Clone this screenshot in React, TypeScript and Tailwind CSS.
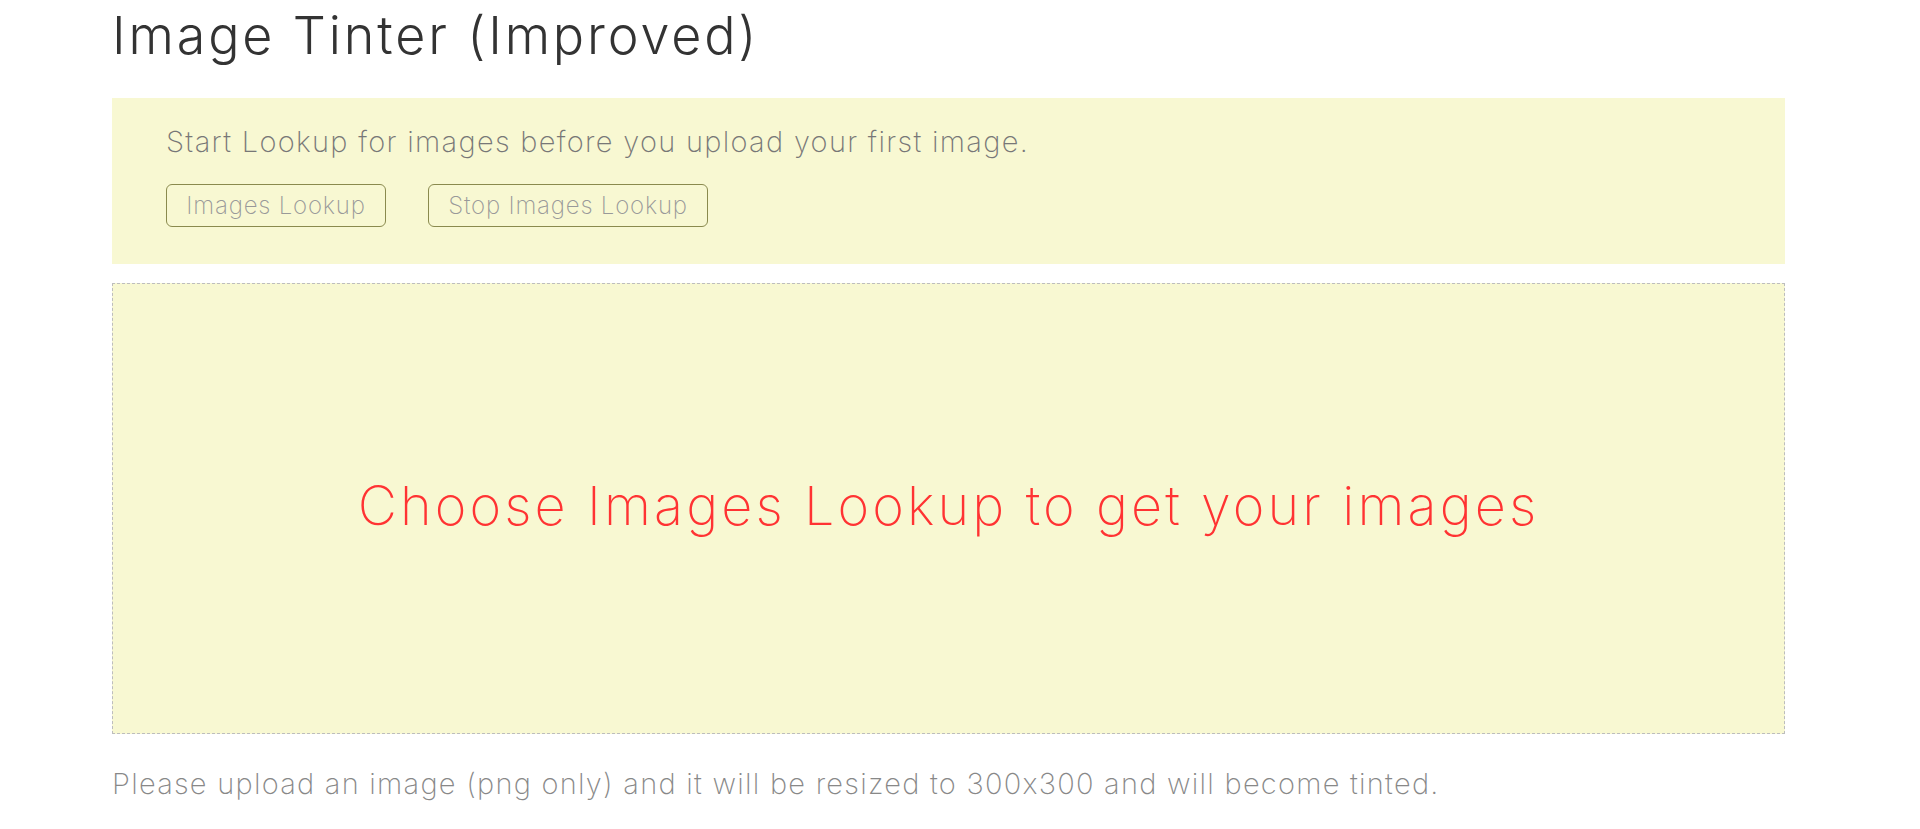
export default function App() {
  return (
    <main
      className="min-h-[1894px] bg-white pl-[112px] [font-feature-settings:'calt'_0]"
      style={{ fontFamily: "Inter, 'Noto Sans', sans-serif" }}
    >
      <div className="w-[1673px]">
        <h1 className="pt-[4px] text-[52px] leading-[64px] font-light tracking-[0.055em] text-[#333333]">
          Image Tinter (Improved)
        </h1>

        {/* Lookup panel */}
        <section className="mt-[30px] h-[166px] bg-[#f8f8d2] px-[54px] pt-[24px]">
          <p className="text-[29px] leading-[40px] font-extralight tracking-[1.3px] text-[#777777]">
            Start Lookup for images before you upload your first image.
          </p>
          <div className="mt-[22px] flex gap-[42px]">
            <button className="h-[43px] w-[220px] rounded-[6px] border border-[#8a8a4e] text-[24px] font-extralight tracking-[0.8px] text-[#999999]">
              Images Lookup
            </button>
            <button className="h-[43px] w-[280px] rounded-[6px] border border-[#8a8a4e] text-[24px] font-extralight tracking-[0.8px] text-[#999999]">
              Stop Images Lookup
            </button>
          </div>
        </section>

        {/* Drop zone */}
        <section className="mt-[19px] flex h-[451px] items-center justify-center border border-dashed border-[#bdbdbd] bg-[#f8f8d2] pb-[6px]">
          <p className="text-[54px] leading-[64px] font-extralight tracking-[3.1px] text-[#ff3333]">
            Choose Images Lookup to get your images
          </p>
        </section>

        <p className="mt-[30px] text-[29px] leading-[40px] font-extralight tracking-[1.25px] text-[#888888]">
          Please upload an image (png only) and it will be resized to 300x300 and will become tinted.
        </p>
      </div>
    </main>
  );
}
